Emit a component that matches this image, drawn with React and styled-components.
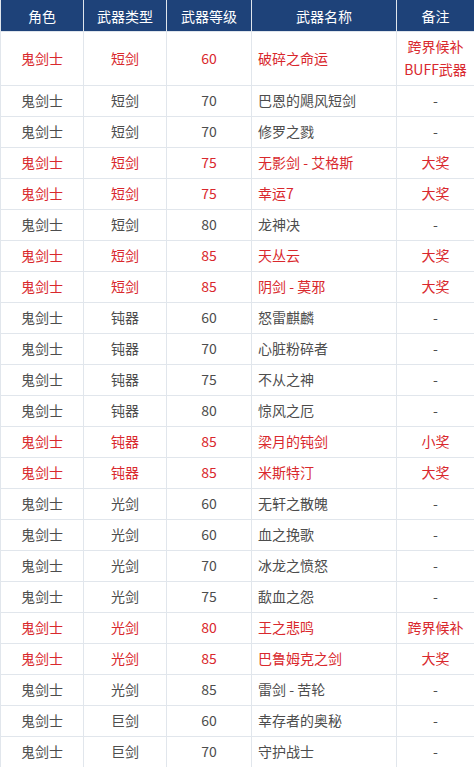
import React from "react";
import styled, { createGlobalStyle } from "styled-components";

const GlobalStyle = createGlobalStyle`
  html, body {
    margin: 0;
    padding: 0;
    background: #fff;
  }
  body {
    font-family: "Noto Sans CJK SC", "Noto Sans", sans-serif;
  }
`;

const Table = styled.table`
  width: 474px;
  border-collapse: collapse;
  table-layout: fixed;
  font-size: 14px;
`;

const HeadCell = styled.th`
  background: #1e4279;
  color: #fff;
  font-weight: normal;
  font-size: 14px;
  height: 31px;
  padding: 0;
  line-height: 30px;
  border: 1px solid #dfe5ec;
  border-top: none;
  text-align: center;
`;

const Cell = styled.td`
  padding: 3px ${props => (props.left ? "6px" : "2px")} 4px;
  line-height: 23px;
  border: 1px solid #e1e6ec;
  color: ${props => (props.hot ? "#d9282d" : "#4d4d4d")};
  text-align: ${props => (props.left ? "left" : "center")};
  white-space: nowrap;
  overflow: hidden;
`;

const rows = [
  [true, "短剑", 60, "破碎之命运", ["跨界候补", "BUFF武器"]],
  [false, "短剑", 70, "巴恩的飓风短剑", "-"],
  [false, "短剑", 70, "修罗之戮", "-"],
  [true, "短剑", 75, "无影剑 - 艾格斯", "大奖"],
  [true, "短剑", 75, "幸运7", "大奖"],
  [false, "短剑", 80, "龙神决", "-"],
  [true, "短剑", 85, "天丛云", "大奖"],
  [true, "短剑", 85, "阴剑 - 莫邪", "大奖"],
  [false, "钝器", 60, "怒雷麒麟", "-"],
  [false, "钝器", 70, "心脏粉碎者", "-"],
  [false, "钝器", 75, "不从之神", "-"],
  [false, "钝器", 80, "惊风之厄", "-"],
  [true, "钝器", 85, "梁月的钝剑", "小奖"],
  [true, "钝器", 85, "米斯特汀", "大奖"],
  [false, "光剑", 60, "无轩之散魄", "-"],
  [false, "光剑", 60, "血之挽歌", "-"],
  [false, "光剑", 70, "冰龙之愤怒", "-"],
  [false, "光剑", 75, "歃血之怨", "-"],
  [true, "光剑", 80, "王之悲鸣", "跨界候补"],
  [true, "光剑", 85, "巴鲁姆克之剑", "大奖"],
  [false, "光剑", 85, "雷剑 - 苦轮", "-"],
  [false, "巨剑", 60, "幸存者的奥秘", "-"],
  [false, "巨剑", 70, "守护战士", "-"],
];

export default function App() {
  return (
    <>
      <GlobalStyle />
      <Table>
        <colgroup>
          <col style={{ width: 83 }} />
          <col style={{ width: 83 }} />
          <col style={{ width: 85 }} />
          <col style={{ width: 145 }} />
          <col style={{ width: 78 }} />
        </colgroup>
        <thead>
          <tr>
            <HeadCell>角色</HeadCell>
            <HeadCell>武器类型</HeadCell>
            <HeadCell>武器等级</HeadCell>
            <HeadCell>武器名称</HeadCell>
            <HeadCell>备注</HeadCell>
          </tr>
        </thead>
        <tbody>
          {rows.map(([hot, type, level, name, note], i) => (
            <tr key={i}>
              <Cell hot={hot}>鬼剑士</Cell>
              <Cell hot={hot}>{type}</Cell>
              <Cell hot={hot}>{level}</Cell>
              <Cell hot={hot} left>{name}</Cell>
              <Cell hot={hot}>
                {Array.isArray(note)
                  ? note.map((n, j) => <div key={j}>{n}</div>)
                  : note}
              </Cell>
            </tr>
          ))}
        </tbody>
      </Table>
    </>
  );
}
